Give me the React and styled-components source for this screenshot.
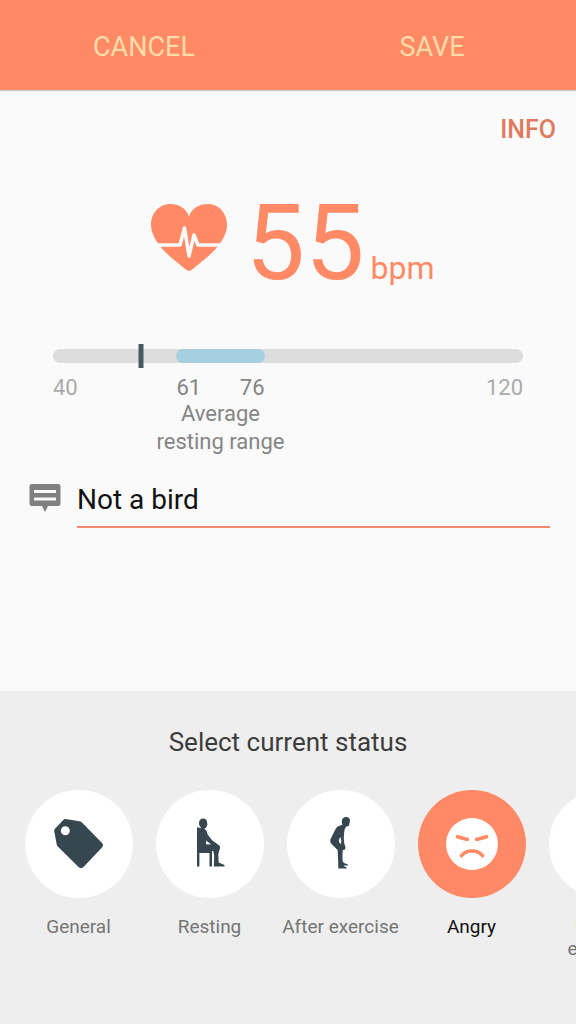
import React, { useState } from "react";
import styled, { createGlobalStyle } from "styled-components";

const GlobalStyle = createGlobalStyle`
    body {
        margin: 0;
        background: #fafafa;
        font-family: Roboto, "Liberation Sans", sans-serif;
    }
    button, input {
        font-family: inherit;
    }
`
const Page = styled.div`
    min-height: 100vh;
    display: flex;
    flex-direction: column;
    overflow: hidden;
`
const ActionBar = styled.header`
    height: 90px;
    display: flex;
    background: #ff8a65;
    box-shadow: 0 1px 1px rgba(0, 0, 0, 0.2);
`
const ActionButton = styled.button`
    flex: 1;
    padding: 4px 0 0;
    border: none;
    background: none;
    color: #ffdca8;
    font-size: 27px;
    line-height: 32px;
    cursor: pointer;
`
const Content = styled.main`
    flex: 1;
    display: flex;
    flex-direction: column;
`
const InfoButton = styled.button`
    align-self: flex-end;
    margin-top: 24px;
    margin-right: 20px;
    padding: 0;
    border: none;
    background: none;
    color: #e07a5f;
    font-size: 25px;
    font-weight: 500;
    line-height: 32px;
    cursor: pointer;
`
const Reading = styled.div`
    display: flex;
    align-items: center;
    justify-content: center;
    gap: 18px;
    margin-top: 33px;
    padding-left: 10px;
    color: #ff8a65;
`
const ReadingIcon = styled.svg`
    flex: none;
    margin-bottom: 10px;
`
const ReadingText = styled.div`
    display: flex;
    align-items: baseline;
    gap: 6px;
`
const ReadingValue = styled.span`
    font-size: 106px;
    line-height: 128px;
`
const ReadingUnit = styled.span`
    font-size: 32px;
`
const Scale = styled.section`
    margin: 42px 53px 0;
`
const Track = styled.div`
    position: relative;
    display: grid;
    grid-template-columns: ${({ $columns }) => $columns};
    height: 14px;
    border-radius: 7px;
    background: #dddddd;
`
const TrackRange = styled.div`
    grid-column: 2;
    border-radius: 7px;
    background: #a6cfe1;
`
const Marker = styled.div`
    position: absolute;
    top: -5px;
    width: 5px;
    height: 24px;
    background: #455a64;
    transform: translateX(-50%);
`
const ScaleLabels = styled.div`
    display: grid;
    grid-template-columns: ${({ $columns }) => $columns};
    margin-top: 11px;
    color: #aaaaaa;
    font-size: 22px;
    line-height: 28px;
`
const RangeLabels = styled.div`
    display: flex;
    justify-content: space-between;
    color: #858585;
`
const MaxLabel = styled.span`
    text-align: right;
`
const RangeCaption = styled.p`
    grid-column: 2;
    justify-self: center;
    margin: -2px 0 0;
    color: #858585;
    text-align: center;
    white-space: pre;
`
const NoteRow = styled.div`
    display: flex;
    align-items: flex-start;
    gap: 16px;
    margin: 16px 26px 0 29px;
`
const NoteLabel = styled.label`
    flex: none;
    display: flex;
    margin-top: 12px;
`
const NoteInput = styled.input`
    flex: 1;
    min-width: 0;
    height: 56px;
    box-sizing: border-box;
    padding: 0;
    border: none;
    border-bottom: 2px solid #f28a6e;
    border-radius: 0;
    outline: none;
    background: none;
    color: #111111;
    font-size: 28px;
`
const StatusPanel = styled.section`
    box-sizing: border-box;
    min-height: 333px;
    padding: 35px 0 0 13px;
    background: #eeeeee;
`
const StatusTitle = styled.h2`
    margin: 0 13px 32px 0;
    color: #3c3c3c;
    font-size: 26px;
    font-weight: 400;
    line-height: 32px;
    text-align: center;
`
const StatusList = styled.div`
    display: flex;
    overflow: hidden;
`
const StatusButton = styled.button`
    flex: none;
    width: 131px;
    display: flex;
    flex-direction: column;
    align-items: center;
    gap: 18px;
    padding: 0;
    border: none;
    background: none;
    color: ${({ $active }) => ($active ? "#111111" : "#757575")};
    font-size: 19px;
    line-height: 22px;
    white-space: pre-line;
    cursor: pointer;
`
const StatusCircle = styled.span`
    width: 108px;
    height: 108px;
    display: flex;
    align-items: center;
    justify-content: center;
    border-radius: 50%;
    background: ${({ $active }) => ($active ? "#ff8a65" : "#ffffff")};
    color: ${({ $active }) => ($active ? "#ffffff" : "#37474f")};
`

const HeartIcon = () => (
    <ReadingIcon width="76" height="68" viewBox="0 0 76 68" aria-hidden="true">
        <path fill="currentColor" d="M38 67c-1 0-2-.6-3-1.400C29 60.500 17 52 9 42 3 34.500 0 27.500 0 20.500 0 9 8.500 0 19 0c9 0 16.500 4 19 13C40.500 4 48 0 57 0c10.500 0 19 9 19 20.500 0 7-3 14-9 21.500-8 10-20 18.500-26 23.600-1 .8-2 1.400-3 1.400z" />
        <path fill="none" stroke="#fafafa" strokeWidth="3.500" strokeLinejoin="round" d="M6 41h23l4.500-17 4.500 28 5-21 4 10h23" />
    </ReadingIcon>
)

const TagIcon = () => (
    <svg width="80" height="80" viewBox="0 0 80 80" aria-hidden="true">
        <path fill="currentColor" fillRule="evenodd" d="M24.500 15.700q.8-.8 2-.6l14 2.200q1.500.2 2.500 1.200l20 20.500q2 2.200 0 4.500L44.500 63q-2.500 2.300-5 0L18.800 42.500q-1-1-1.100-2L15.200 27q-.2-1 .6-2zM26.300 22.200a4.500 4.500 0 1 0 0 9 4.500 4.500 0 1 0 0-9z" />
    </svg>
)

const SittingIcon = () => (
    <svg width="80" height="80" viewBox="0 0 80 80" fill="currentColor" aria-hidden="true">
        <path d="M29 19c0-2.800 1.600-4.600 4.200-4.600 2.500 0 4 1.700 3.900 4l.4 2.300-.7.500c0 2-.6 3-2.200 3l.2 1c1.700.9 2.400 2.600 2.700 5l4.500 6 6 4.200c1.600.8 2.300 2 2 3.800L48.300 50l.4 8.500 5.800 2.600v1.400H43.800l.4-11-1-4.500H27V23.500h2l1.400.8.8-.6c-1.500-1.300-2.200-2.700-2.200-4.700zM36 36.500v3.800l5.200.2z" fillRule="evenodd" />
        <path d="M27 40h2.400v22.500H27zM27 45h15v4H27zM39.500 47H42v15.500h-2.500z" />
    </svg>
)

const BendingIcon = () => (
    <svg width="80" height="80" viewBox="0 0 80 80" aria-hidden="true">
        <path fill="currentColor" fillRule="evenodd" d="M40.800 17.500c0-2.800 1.800-4.400 4.400-4.400 2.500 0 3.900 1.600 3.800 4l-.6 2.500-.4 2.200-2.500.7-1.700 2.200-.6 3.300-.4 6 .4 5 1.300 4.500-.5 2-2.200.4-.4 5.500.3 6 1.400 1.700 3.800 1.400v1.100h-3.900l.1.700 2.500 1v1.100h-8.300l-.2-9L36.600 46l-6-6c-1.600-1.600-1.700-3.200-.9-5.200l5-10c.8-1.700 2.400-3 4.600-3.400l2-.6zM39.400 33l-1.600 3 .4 2.600 1.900 1.500.2-4z" />
    </svg>
)

const AngryIcon = () => (
    <svg width="80" height="80" viewBox="0 0 80 80" aria-hidden="true">
        <circle cx="40" cy="40" r="26" fill="currentColor" />
        <path fill="none" stroke="#ff8a65" strokeWidth="3.600" strokeLinecap="round" d="M25.500 32.700l10 2.700M54.500 32.700l-10 2.700M29.500 51.500c5-6 16-6 21 0" />
    </svg>
)

const NoteIcon = () => (
    <svg width="32" height="28" viewBox="0 0 32 28" role="img" aria-label="Note">
        <path fill="#808080" d="M3 0h26q2.500 0 2.500 2.500v17q0 2.500-2.500 2.500H19l-3 6-3-6H3Q.5 22 .5 19.500v-17Q.5 0 3 0z" />
        <path stroke="#fafafa" strokeWidth="3" d="M5 7.500h22M5 15h22" />
    </svg>
)

const statuses = [
    { id: "general", label: "General", Icon: TagIcon },
    { id: "resting", label: "Resting", Icon: SittingIcon },
    { id: "after", label: "After exercise", Icon: BendingIcon },
    { id: "angry", label: "Angry", Icon: AngryIcon },
    { id: "before", label: "Before\nexercise" },
]

const scale = { min: 40, max: 120, low: 61, high: 76 }

export default function App() {
    const [note, setNote] = useState("Not a bird")
    const [status, setStatus] = useState("angry")
    const bpm = 55
    const columns = [scale.low - scale.min, scale.high - scale.low, scale.max - scale.high]
        .map((n) => `minmax(0, ${n}fr)`)
        .join(" ")
    const markerLeft = ((bpm - scale.min) / (scale.max - scale.min)) * 100

    return (
        <Page>
            <GlobalStyle />
            <ActionBar>
                <ActionButton type="button">CANCEL</ActionButton>
                <ActionButton type="button">SAVE</ActionButton>
            </ActionBar>
            <Content>
                <InfoButton type="button">INFO</InfoButton>
                <Reading>
                    <HeartIcon />
                    <ReadingText>
                        <ReadingValue>{bpm}</ReadingValue>
                        <ReadingUnit>bpm</ReadingUnit>
                    </ReadingText>
                </Reading>
                <Scale>
                    <Track $columns={columns}>
                        <TrackRange />
                        <Marker style={{ left: `${markerLeft}%` }} />
                    </Track>
                    <ScaleLabels $columns={columns}>
                        <span>{scale.min}</span>
                        <RangeLabels>
                            <span>{scale.low}</span>
                            <span>{scale.high}</span>
                        </RangeLabels>
                        <MaxLabel>{scale.max}</MaxLabel>
                        <RangeCaption>{"Average\nresting range"}</RangeCaption>
                    </ScaleLabels>
                </Scale>
                <NoteRow>
                    <NoteLabel htmlFor="note">
                        <NoteIcon />
                    </NoteLabel>
                    <NoteInput id="note" type="text" value={note} onChange={(e) => setNote(e.target.value)} />
                </NoteRow>
            </Content>
            <StatusPanel>
                <StatusTitle>Select current status</StatusTitle>
                <StatusList>
                    {statuses.map(({ id, label, Icon }) => (
                        <StatusButton
                            key={id}
                            type="button"
                            $active={status === id}
                            aria-pressed={status === id}
                            onClick={() => setStatus(id)}
                        >
                            <StatusCircle $active={status === id}>{Icon && <Icon />}</StatusCircle>
                            {label}
                        </StatusButton>
                    ))}
                </StatusList>
            </StatusPanel>
        </Page>
    )
}
